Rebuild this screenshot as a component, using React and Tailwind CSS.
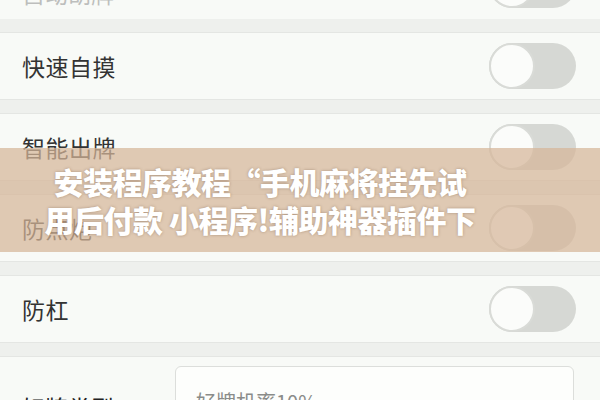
import React from 'react';

const font = { fontFamily: '"Noto Sans CJK SC", "Noto Sans", sans-serif' };

function Toggle() {
  return (
    <div className="relative w-[87px] h-[46px] rounded-full bg-[#d6d8d4]">
      <div className="absolute left-0 top-0 w-[46px] h-[46px] rounded-full bg-[#fbfcfa] border-2 border-[#d9dbd7]" />
    </div>
  );
}

function Row({ label, className = '' }) {
  return (
    <div className={`h-[68px] flex items-center justify-between pl-[22px] pr-[24px] bg-[#f8faf7] border-y border-[#e4e6e3] ${className}`}>
      <span className="text-[23px] text-[#333] tracking-[0.5px]">{label}</span>
      <Toggle />
    </div>
  );
}

function Gap() {
  return <div className="h-[13px] bg-[#eef0ed]" />;
}

export default function App() {
  const rows = ['快速自摸', '智能出牌', '防点炮', '防杠'];

  return (
    <div className="relative w-[600px] h-[400px] overflow-hidden bg-[#f8faf7]" style={font}>
      <div className="-mt-[49px]">
        <div className="h-[68px] flex items-end justify-between pl-[22px] pr-[24px] pb-0 bg-[#f8faf7]">
          <span className="text-[23px] leading-[24px] text-[#666] opacity-40 translate-y-[-14px]">自动胡牌</span>
          <div className="self-center"><Toggle /></div>
        </div>
        {rows.map((r) => (
          <React.Fragment key={r}>
            <Gap />
            <Row label={r} />
          </React.Fragment>
        ))}
        <Gap />
        <div className="h-[80px] flex items-start pl-[22px] pr-[26px] pt-[9px] bg-[#f8faf7] border-t border-[#e4e6e3]">
          <span className="mt-[24px] w-[153px] text-[23px] text-[#222]">好牌类型</span>
          <div className="flex-1 h-[60px] rounded-[6px] border border-[#dcdedb] bg-[#fdfefc] pl-[20px] pt-[20px]">
            <span className="text-[20px] text-[#8a8c89]">好牌机率10%</span>
          </div>
        </div>
      </div>

      {/* promo band laid over the settings list */}
      <div className="absolute left-0 right-0 top-[148px] h-[104px] bg-[rgba(214,181,153,0.72)] flex items-center justify-center pr-[80px]">
        <p
          className="text-center text-white font-black text-[30px] leading-[38px] tracking-[-0.5px]"
          style={{ textShadow: '0 0 3px rgba(90,60,40,0.4)' }}
        >
          安装程序教程“手机麻将挂先试
          <br />
          用后付款 小程序!辅助神器插件下
        </p>
      </div>
    </div>
  );
}
